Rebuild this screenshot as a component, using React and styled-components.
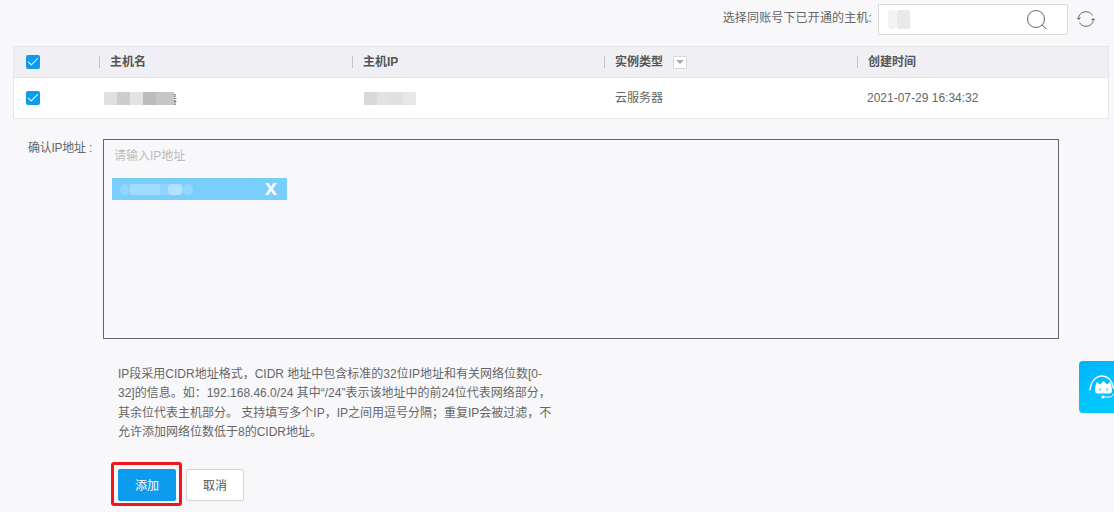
import React from "react";
import styled, { createGlobalStyle } from "styled-components";
import { Check } from "lucide-react";

const GlobalStyle = createGlobalStyle`
  html, body {
    margin: 0;
    padding: 0;
    background: #f8f8fb;
  }
  body {
    font-family: "Liberation Sans", "Noto Sans CJK SC", sans-serif;
    font-size: 12px;
    color: #555;
    overflow: hidden;
  }
`;

const Page = styled.div`
  width: 1114px;
  height: 512px;
  position: relative;
  overflow: hidden;
`;

const Toolbar = styled.div`
  height: 46px;
  box-sizing: border-box;
  padding: 4px 18px 0 0;
  display: flex;
  justify-content: flex-end;
  align-items: flex-start;
`;

const ToolbarLabel = styled.span`
  line-height: 29px;
  color: #666;
  margin-right: 6px;
  letter-spacing: 0.15px;
`;

const SearchBox = styled.div`
  width: 190px;
  height: 31px;
  box-sizing: border-box;
  background: #fff;
  border: 1px solid #d9d9d9;
  border-radius: 1px;
  display: flex;
  align-items: center;
  justify-content: space-between;
  padding: 0 19px 0 9px;
`;

const RefreshButton = styled.div`
  width: 20px;
  height: 20px;
  margin: 5px 0 0 8px;
`;

const Table = styled.div`
  margin: 0 5px 0 13px;
  border: 1px solid #e6e6e9;
  background: #fff;
`;

const Row = styled.div`
  display: grid;
  grid-template-columns: 85px 253px 252px 253px 1fr;
  align-items: center;
  height: ${(p) => p.$height}px;
  background: ${(p) => (p.$head ? "#f0f0f4" : "#fff")};
  border-bottom: ${(p) => (p.$head ? "1px solid #e6e6e9" : "none")};
`;

const CheckCell = styled.div`
  padding-left: 12px;
  display: flex;
  align-items: center;
`;

const Checkbox = styled.span`
  width: 14px;
  height: 14px;
  border-radius: 2px;
  background: #0d9bed;
  color: #fff;
  display: flex;
  align-items: center;
  justify-content: center;
`;

const HeadCell = styled.div`
  display: flex;
  align-items: center;
  height: 12px;
  padding-left: 10px;
  border-left: 1px solid #c4c4c8;
  font-weight: 700;
  color: #555;
  line-height: 12px;
`;

const BodyCell = styled.div`
  padding: 0 0 ${(p) => p.$lift ?? 0}px ${(p) => p.$pad ?? 11}px;
  display: flex;
  align-items: center;
  color: #666;
`;

const FilterButton = styled.span`
  width: 14px;
  height: 13px;
  margin-left: 10px;
  box-sizing: border-box;
  background: #fff;
  border: 1px solid #d4d4d4;
  border-radius: 1px;
  display: flex;
  align-items: center;
  justify-content: center;
  &::after {
    content: "";
    border-left: 4px solid transparent;
    border-right: 4px solid transparent;
    border-top: 4px solid #a8a8a8;
  }
`;

const Blur = styled.span`
  display: flex;
  height: ${(p) => p.$height}px;
  overflow: hidden;
  position: relative;
  z-index: 1;
`;

const BlurPiece = styled.i`
  display: block;
  height: 100%;
  width: ${(p) => p.$w}px;
  background: ${(p) => p.$c};
  border-radius: ${(p) => p.$r ?? 0}px;
`;

const HostTail = styled.span`
  margin-left: -9px;
  color: #777;
`;

const FormRow = styled.div`
  display: flex;
  align-items: flex-start;
  margin-top: 20px;
`;

const FieldLabel = styled.label`
  width: 92px;
  flex: none;
  text-align: right;
  line-height: 16px;
  padding-top: 1px;
  color: #666;
  letter-spacing: -0.25px;
`;

const IpBox = styled.div`
  margin-left: 11px;
  width: 956px;
  height: 200px;
  box-sizing: border-box;
  border: 1px solid #666;
  padding: 9px 8px;
`;

const Placeholder = styled.div`
  line-height: 14px;
  padding-left: 2px;
  color: #bbb;
`;

const IpTag = styled.div`
  margin-top: 15px;
  width: 175px;
  height: 22px;
  background: #7acefc;
  display: flex;
  align-items: center;
  justify-content: space-between;
  padding: 0 10px 0 8px;
  box-sizing: border-box;
`;

const TagClose = styled.span`
  color: #fff;
  font-size: 22px;
  font-weight: 700;
  line-height: 22px;
  position: relative;
  top: -1px;
`;

const Help = styled.p`
  margin: 26px 0 0 118px;
  width: 436px;
  line-height: 19.3px;
  color: #666;
`;

const Actions = styled.div`
  display: flex;
  align-items: flex-start;
  margin: 20px 0 0 111px;
`;

const Highlight = styled.div`
  box-sizing: border-box;
  border: 3px solid #f5141a;
  border-radius: 3px;
  padding: 4px;
  display: flex;
  width: 71px;
  height: 44px;
`;

const Button = styled.button`
  width: 58px;
  height: 32px;
  flex: none;
  box-sizing: border-box;
  font: inherit;
  border-radius: 2px;
  padding: 0 0 2px;
  background: ${(p) => (p.$primary ? "#0d9bed" : "#fff")};
  color: ${(p) => (p.$primary ? "#fff" : "#555")};
  border: 1px solid ${(p) => (p.$primary ? "#0d9bed" : "#d4d4d4")};
  margin: ${(p) => (p.$side ? "7px 0 0 4px" : "0")};
`;

const ChatWidget = styled.div`
  position: absolute;
  right: 0;
  top: 361px;
  width: 35px;
  height: 52px;
  border-radius: 4px 0 0 4px;
  background: linear-gradient(160deg, #00b4fb, #00ccff);
`;

const SearchIcon = () => (
  <svg width="22" height="22" viewBox="0 0 22 22" fill="none" stroke="#666" strokeWidth="1">
    <circle cx="10" cy="10" r="8.5" />
    <path d="M16 16l4.5 4" />
  </svg>
);

const RefreshIcon = () => (
  <svg width="20" height="20" viewBox="0 0 20 20" fill="none" stroke="#666" strokeWidth="1">
    <path d="M2.6 8.2A7.6 7.6 0 0 1 16.4 6.4" />
    <path d="M17.4 11.8A7.6 7.6 0 0 1 3.6 13.6" />
    <path d="M0.6 8.8L2.8 11l2.2-2.4z" fill="#666" stroke="none" />
    <path d="M14.9 11.2L17.2 8.9l2.2 2.3z" fill="#666" stroke="none" />
  </svg>
);

const WidgetIcon = () => (
  <svg width="35" height="52" viewBox="0 0 35 52" fill="none">
    <path d="M11 29C12 20 17 15 23 15s10 5 11.500 12" stroke="#fff" strokeWidth="1.400" strokeLinecap="round" />
    <path d="M16 30c0-4 1-8 2-9l3 2.500L24.500 20l3.500 3.500 3-2.500c1 1 2 5 2 9 0 1.500-1 2.500-2.500 2.500h-12C17 32.500 16 31.500 16 30z" fill="#fff" />
    <circle cx="21" cy="28.500" r="1.200" fill="#7fd8f7" />
    <circle cx="28" cy="28.500" r="1.200" fill="#7fd8f7" />
    <path d="M24 36h7c1.500 0 2.500-1 3-3" stroke="#fff" strokeWidth="1" />
    <circle cx="24" cy="36" r="1.500" fill="#fff" />
  </svg>
);

const CheckMark = () => <Check size={14} strokeWidth={1.8} />;

export default function App() {
  return (
    <Page>
      <GlobalStyle />
      <Toolbar>
        <ToolbarLabel>选择同账号下已开通的主机:</ToolbarLabel>
        <SearchBox>
          <Blur $height={19}>
            <BlurPiece $w={9} $c="#f3f3f3" $r={4} />
            <BlurPiece $w={13} $c="#e9e9e9" $r={2} />
          </Blur>
          <SearchIcon />
        </SearchBox>
        <RefreshButton>
          <RefreshIcon />
        </RefreshButton>
      </Toolbar>

      <Table>
        <Row $head $height={30}>
          <CheckCell>
            <Checkbox>
              <CheckMark />
            </Checkbox>
          </CheckCell>
          <HeadCell>主机名</HeadCell>
          <HeadCell>主机IP</HeadCell>
          <HeadCell>
            实例类型
            <FilterButton />
          </HeadCell>
          <HeadCell>创建时间</HeadCell>
        </Row>
        <Row $height={40}>
          <CheckCell>
            <Checkbox>
              <CheckMark />
            </Checkbox>
          </CheckCell>
          <BodyCell $pad={5}>
            <Blur $height={13}>
              <BlurPiece $w={13} $c="#e0e0e0" />
              <BlurPiece $w={13} $c="#cdcdcd" />
              <BlurPiece $w={13} $c="#e3e3e3" />
              <BlurPiece $w={13} $c="#bcbcbc" />
              <BlurPiece $w={18} $c="#c6c6c6" />
            </Blur>
            <HostTail>器</HostTail>
          </BodyCell>
          <BodyCell $pad={12}>
            <Blur $height={13}>
              <BlurPiece $w={13} $c="#d9d9d9" />
              <BlurPiece $w={13} $c="#e2e2e2" />
              <BlurPiece $w={13} $c="#e0e0e0" />
              <BlurPiece $w={13} $c="#e8e8e8" />
            </Blur>
          </BodyCell>
          <BodyCell $pad={11} $lift={3}>云服务器</BodyCell>
          <BodyCell $pad={10} $lift={1}>2021-07-29 16:34:32</BodyCell>
        </Row>
      </Table>

      <FormRow>
        <FieldLabel>确认IP地址 :</FieldLabel>
        <IpBox>
          <Placeholder>请输入IP地址</Placeholder>
          <IpTag>
            <Blur $height={11}>
              <BlurPiece $w={10} $c="#8fd6fc" $r={5} />
              <BlurPiece $w={30} $c="#a0dcfd" />
              <BlurPiece $w={8} $c="#8fd6fc" />
              <BlurPiece $w={14} $c="#b0e2fe" $r={3} />
              <BlurPiece $w={11} $c="#92d8fc" $r={5} />
            </Blur>
            <TagClose>x</TagClose>
          </IpTag>
        </IpBox>
      </FormRow>

      <Help>
        IP段采用CIDR地址格式，CIDR 地址中包含标准的32位IP地址和有关网络位数[0-32]的信息。如：192.168.46.0/24 其中“/24”表示该地址中的前24位代表网络部分，其余位代表主机部分。 支持填写多个IP，IP之间用逗号分隔；重复IP会被过滤，不允许添加网络位数低于8的CIDR地址。
      </Help>

      <Actions>
        <Highlight>
          <Button $primary>添加</Button>
        </Highlight>
        <Button $side>取消</Button>
      </Actions>

      <ChatWidget>
        <WidgetIcon />
      </ChatWidget>
    </Page>
  );
}
